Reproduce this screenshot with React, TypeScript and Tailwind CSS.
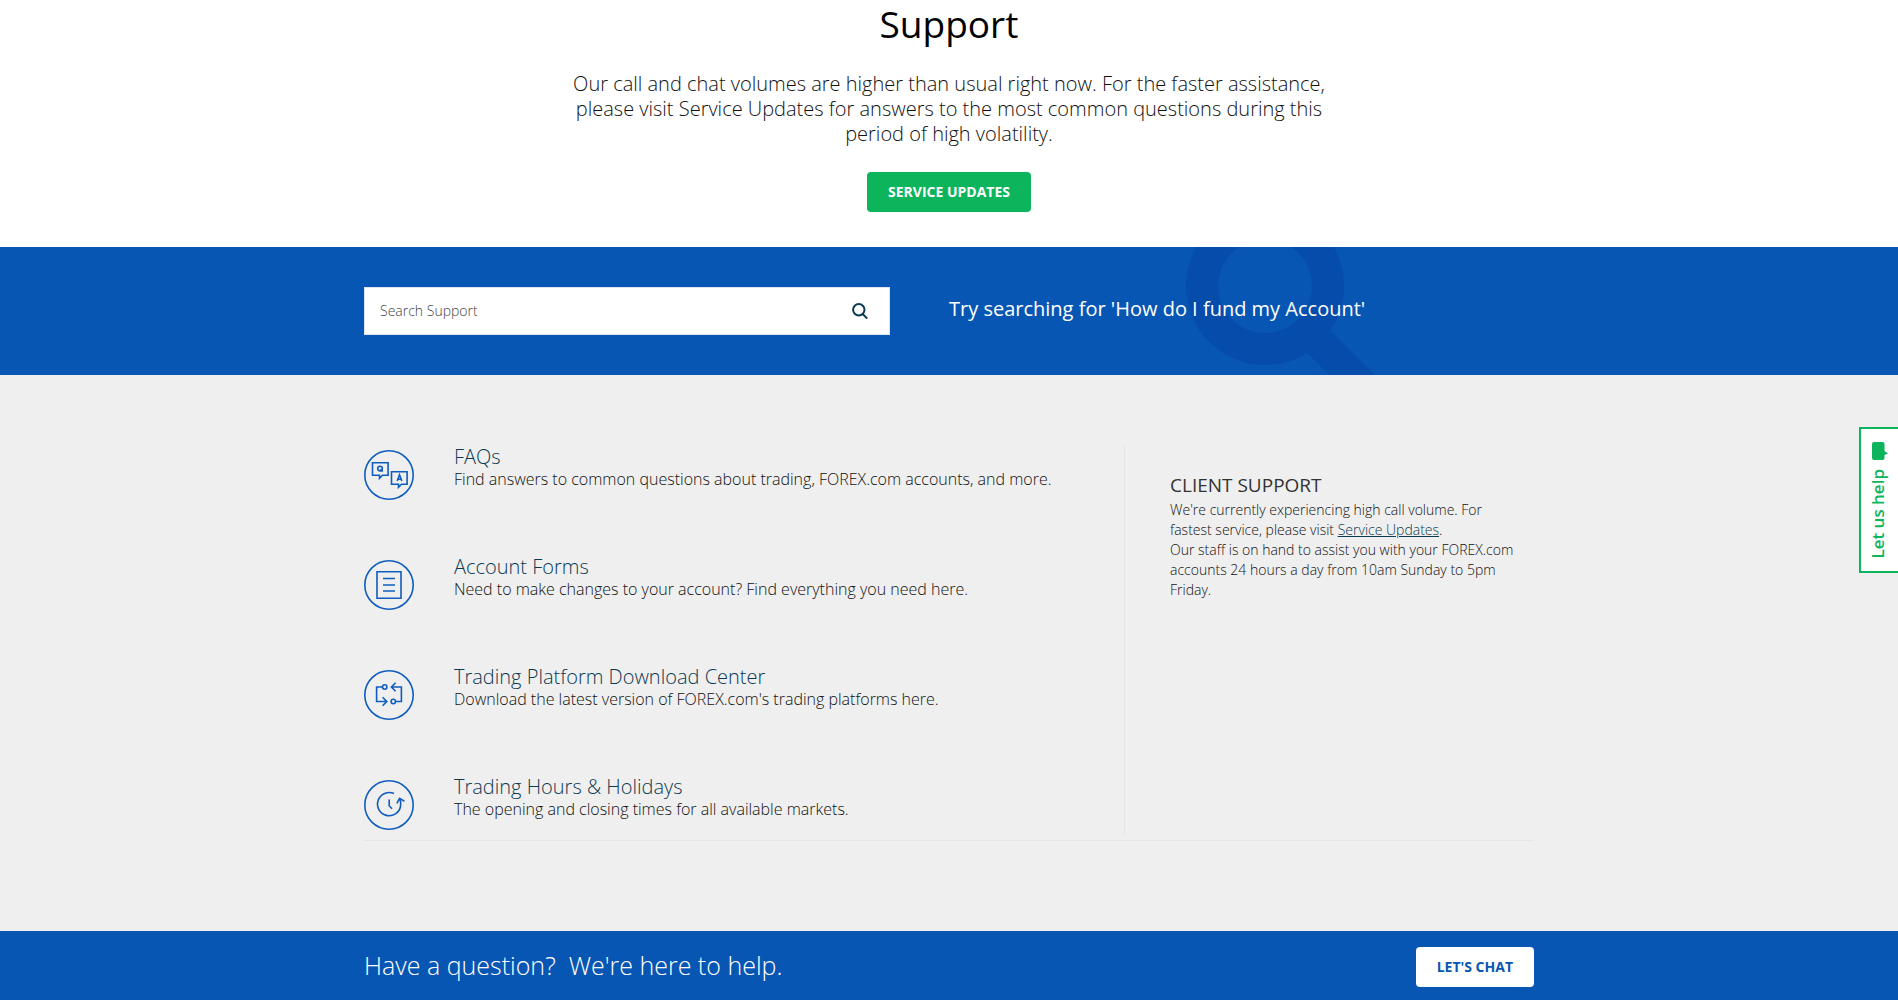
import type { ReactNode } from "react"

const supportLinks = [
    {title : "FAQs", description : "Find answers to common questions about trading, FOREX.com accounts, and more.", icon : <FaqIcon />},
    {title : "Account Forms", description : "Need to make changes to your account? Find everything you need here.", icon : <FormIcon />},
    {title : "Trading Platform Download Center", description : "Download the latest version of FOREX.com's trading platforms here.", icon : <PlatformIcon />},
    {title : "Trading Hours & Holidays", description : "The opening and closing times for all available markets.", icon : <HoursIcon />},
]

function CircleIcon({ children } : { children : ReactNode }){
    return(
        <svg viewBox="0 0 50 50" className="size-[50px] shrink-0 text-[#0f5dbe]" fill="none" stroke="currentColor" strokeWidth="1.6" aria-hidden="true">
            <circle cx="25" cy="25" r="24.2" />
            {children}
        </svg>
    )
}

function FaqIcon(){
    return(
        <CircleIcon>
            <path d="M8.5 12.8h15.6v12.4h-5.6l-3 3v-3h-7z" />
            <path d="M27.5 21.8h15.6v12.4h-5.6l-3 3v-3h-7z" />
            <circle cx="16" cy="18.6" r="2.3" />
            <path d="M16.5 19.2l2.2 2.4M33.2 31l2.3-6.2 2.3 6.2M34 29.2h3" />
        </CircleIcon>
    )
}

function FormIcon(){
    return(
        <CircleIcon>
            <path d="M13 11.7h24v26.6H13zM19 18.5h12M19 25h12M19 31h12" />
        </CircleIcon>
    )
}

function PlatformIcon(){
    return(
        <CircleIcon>
            <circle cx="20.7" cy="17" r="2.2" />
            <circle cx="29.3" cy="31.5" r="2.2" />
            <path d="M18.4 17h-5.8v14.5h9.6M18.6 27.2l4.2 4.3-4.2 4.3" />
            <path d="M31.6 31.5h5.8V17h-9.6M31.6 12.7L27.4 17l4.2 4.3" />
        </CircleIcon>
    )
}

function HoursIcon(){
    return(
        <CircleIcon>
            <path d="M30 13.6A11.6 11.6 0 1 0 36.6 26M25.2 19.5v6.2l2.8 3" />
            <path d="M32.8 23.4l2.8-5 4.8 2.8M35.6 18.4c1 2 1.4 4.6 1 7.6" />
        </CircleIcon>
    )
}

function Hero(){
    return(
        <section className="flex flex-col items-center bg-white px-4 pb-[35px] text-center">
            <h1 className="text-[37px] leading-[48px] text-black">Support</h1>
            <p className="mt-[23px] max-w-[800px] text-xl leading-[25px] font-light text-[#111]">
                Our call and chat volumes are higher than usual right now. For the faster assistance, please visit Service Updates for answers to the most common questions during this period of high volatility.
            </p>
            <a href="#updates" className="mt-[26px] flex h-10 items-center rounded bg-[#0cb55b] px-[21px] text-sm font-bold text-white">SERVICE UPDATES</a>
        </section>
    )
}

function SearchBand(){
    return(
        <section className="relative overflow-hidden bg-[#0856b3] px-4 py-10">
            {/* Watermark */}
            <svg viewBox="0 0 200 128" className="absolute top-0 left-1/2 ml-[230px] h-32 w-[200px]" fill="none" stroke="#054cab" strokeWidth="32" aria-hidden="true">
                <circle cx="86" cy="39" r="63" />
                <path d="M131 86l60 60" />
            </svg>
            <div className="relative mx-auto flex max-w-[1170px] items-center">
                <form className="flex h-12 w-[526px] items-center border border-[#dde3ea] bg-white pr-[21px] pl-[15px]">
                    <input type="search" aria-label="Search Support" placeholder="Search Support" className="min-w-0 flex-1 text-sm font-light text-[#444] outline-none placeholder:text-[#444]" />
                    <button type="submit" aria-label="Search" className="text-[#0b3a53]">
                        <svg viewBox="0 0 16 16" className="size-4" fill="none" stroke="currentColor" strokeWidth="2" aria-hidden="true">
                            <circle cx="6.8" cy="6.8" r="5.7" />
                            <path d="M10.5 10.8l4.7 4.8" />
                        </svg>
                    </button>
                </form>
                <p className="ml-[59px] pb-1 text-xl text-white">Try searching for 'How do I fund my Account'</p>
            </div>
        </section>
    )
}

function SupportTopics(){
    return(
        <section className="bg-[#efefef] px-4 pt-[70px] pb-[90px]">
            <div className="mx-auto flex max-w-[1170px] border-b border-[#e5e5e5] pb-1">
                <ul className="flex w-[761px] flex-col gap-[60px] border-r border-[#e5e5e5] pt-[5px] pb-[6px]">
                    {
                        supportLinks.map((l, k) => (
                            <li key={k} className="flex h-[50px] gap-10">
                                {l.icon}
                                <div className="-mt-1">
                                    <h2 className="text-xl leading-[22px] font-light text-[#0b3a53]"><a href="#topic">{l.title}</a></h2>
                                    <p className="text-base leading-[22px] font-light text-[#111]">{l.description}</p>
                                </div>
                            </li>
                        ))
                    }
                </ul>
                <aside className="flex-1 pt-7 pr-3.5 pl-[45px] text-sm leading-5 font-light text-[#111]">
                    <h2 className="pb-[3px] text-[19px] leading-6 font-normal text-[#333]">CLIENT SUPPORT</h2>
                    <p>We're currently experiencing high call volume. For fastest service, please visit <a href="#updates" className="text-[#0b3a53] underline">Service Updates</a>.</p>
                    <p>Our staff is on hand to assist you with your FOREX.com accounts 24 hours a day from 10am Sunday to 5pm Friday.</p>
                </aside>
            </div>
        </section>
    )
}

function ChatBar(){
    return(
        <footer className="bg-[#0856b3] px-4 pt-4 pb-[13px]">
            <div className="mx-auto flex max-w-[1170px] items-center justify-between">
                <p className="pb-1 text-[25px] leading-9 font-light whitespace-pre text-white">Have a question?  We're here to help.</p>
                <button type="button" className="h-10 rounded bg-white px-[21px] text-sm font-bold text-[#0856b3]">LET'S CHAT</button>
            </div>
        </footer>
    )
}

function HelpTab(){
    return(
        <button type="button" className="fixed top-[427px] right-0 flex h-[146px] w-[39px] flex-col items-center justify-center gap-2 border-2 border-r-0 border-[#0cb55b] bg-white pr-1 text-[#0cb55b]">
            <svg viewBox="0 0 16 20" className="ml-1 h-5 w-4" fill="currentColor" aria-hidden="true">
                <path d="M2 1h8.5q2 0 2 2v7l3.500 2.500-3.500 1.500V17q0 2-2 2H2q-2 0-2-2V3q0-2 2-2z" />
            </svg>
            <span className="rotate-180 text-[17px] leading-6 font-semibold [writing-mode:vertical-rl]">Let us help</span>
        </button>
    )
}

function App(){
    return(
        <main className="min-h-screen bg-white font-['Open_Sans','Noto_Sans',sans-serif]">
            <Hero />
            <SearchBand />
            <SupportTopics />
            <ChatBar />
            <HelpTab />
        </main>
    )
}

export default App
